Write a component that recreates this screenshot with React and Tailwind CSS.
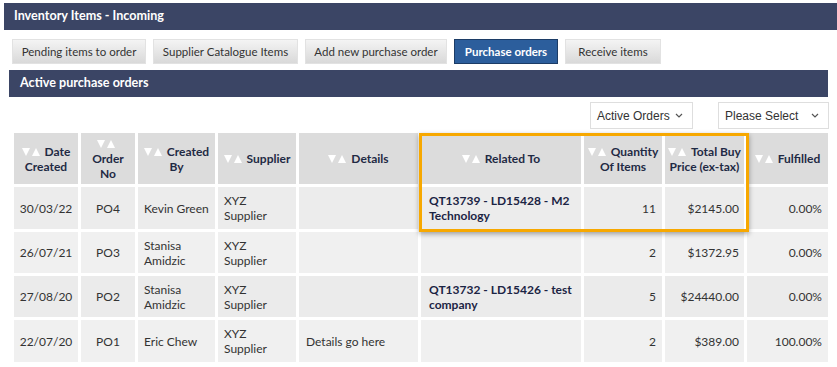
import React from 'react';

const BUTTONS = [
  { label: 'Pending items to order', w: 'w-[134px]' },
  { label: 'Supplier Catalogue Items', w: 'w-[145px]' },
  { label: 'Add new purchase order', w: 'w-[142px]' },
  { label: 'Purchase orders', w: 'w-[104px]', active: true },
  { label: 'Receive items', w: 'w-[96px]' },
];

const ORDERS = [
  { date: '30/03/22', no: 'PO4', by: 'Kevin Green', supplier: 'XYZ Supplier', details: '', related: 'QT13739 - LD15428 - M2 Technology', qty: 11, price: '$2145.00', fulfilled: '0.00%', bg: 'bg-[#ececec]', h: 'h-[42px]' },
  { date: '26/07/21', no: 'PO3', by: 'Stanisa Amidzic', supplier: 'XYZ Supplier', details: '', related: '', qty: 2, price: '$1372.95', fulfilled: '0.00%', bg: 'bg-[#f0f0f0]', h: 'h-[41px]' },
  { date: '27/08/20', no: 'PO2', by: 'Stanisa Amidzic', supplier: 'XYZ Supplier', details: '', related: 'QT13732 - LD15426 - test company', qty: 5, price: '$24440.00', fulfilled: '0.00%', bg: 'bg-[#ebebeb]', h: 'h-[41px]' },
  { date: '22/07/20', no: 'PO1', by: 'Eric Chew', supplier: 'XYZ Supplier', details: 'Details go here', related: '', qty: 2, price: '$389.00', fulfilled: '100.00%', bg: 'bg-[#f0f0f0]', h: 'h-[42px]' },
];

function SortArrows() {
  return (
    <svg width="18" height="8" viewBox="0 0 18 8" className="inline-block align-baseline mr-[5px]">
      <polygon points="0,0 8,0 4,8" fill="#ffffff" />
      <polygon points="10,8 18,8 14,0" fill="#ffffff" />
    </svg>
  );
}

function Th({ w, children }) {
  return (
    <th className={`${w} bg-[#dcdcdc] px-[2px] text-center align-middle whitespace-nowrap font-bold text-[12px] leading-[15px] text-[#1f2a44]`}>
      {children}
    </th>
  );
}

function FakeSelect({ label, w }) {
  return (
    <div className={`${w} h-[27px] flex items-center justify-between border border-[#dedede] bg-white pl-[6px] pr-[9px] whitespace-nowrap font-['Liberation_Sans',Arial,sans-serif] text-[12px] text-[#333]`}>
      <span>{label}</span>
      <svg width="8" height="5" viewBox="0 0 8 5">
        <polyline points="1,1 4,4 7,1" fill="none" stroke="#555" strokeWidth="1.2" />
      </svg>
    </div>
  );
}

export default function App() {
  return (
    <div className="w-[837px] h-[367px] overflow-hidden bg-white font-['Lato',sans-serif] pt-[3px]">
      <div className="ml-[4px] h-[27px] bg-[#3b4565] pl-[10px] flex items-center text-white font-bold text-[12.6px]">
        Inventory Items - Incoming
      </div>

      <div className="flex gap-[7px] ml-[12px] mt-[9px]">
        {BUTTONS.map((b) => (
          <div
            key={b.label}
            className={`${b.w} h-[25px] flex items-center justify-center whitespace-nowrap text-[11.5px] ${
              b.active
                ? 'bg-[#2c5e9c] border border-[#1c3c66] text-white font-bold'
                : 'bg-gradient-to-b from-[#f4f4f4] to-[#d9d9d9] border border-[#e2e2e2] text-[#333]'
            }`}
          >
            {b.label}
          </div>
        ))}
      </div>

      <div className="mx-[9px] mt-[6px] h-[27px] bg-[#3b4565] pl-[11px] flex items-center text-white font-bold text-[12.6px]">
        Active purchase orders
      </div>

      <div className="flex justify-end gap-[25px] mt-[5px] mr-[8px]">
        <FakeSelect label="Active Orders" w="w-[103px]" />
        <FakeSelect label="Please Select" w="w-[111px]" />
      </div>

      <div className="relative ml-[11px] mt-[1px] w-[820px]">
        <table className="table-fixed border-separate border-spacing-[3px] w-[820px]">
          <thead>
            <tr className="h-[51px]">
              <Th w="w-[64px]"><SortArrows />Date<br />Created</Th>
              <Th w="w-[54px]"><SortArrows /><br />Order<br />No</Th>
              <Th w="w-[77px]"><SortArrows />Created<br />By</Th>
              <Th w="w-[78px]"><SortArrows />Supplier</Th>
              <Th w="w-[119px]"><SortArrows />Details</Th>
              <Th w="w-[160px]"><SortArrows />Related To</Th>
              <Th w="w-[78px]"><SortArrows />Quantity<br />Of Items</Th>
              <Th w="w-[79px]"><SortArrows />Total Buy<br />Price (ex-tax)</Th>
              <Th w="w-[81px]"><SortArrows />Fulfilled</Th>
            </tr>
          </thead>
          <tbody className="text-[12px] leading-[15px] text-[#333]">
            {ORDERS.map((o) => (
              <tr key={o.no} className={o.h}>
                <td className={`${o.bg} text-center`}>{o.date}</td>
                <td className={`${o.bg} text-center`}>{o.no}</td>
                <td className={`${o.bg} px-[6px]`}>{o.by}</td>
                <td className={`${o.bg} px-[6px]`}>{o.supplier}</td>
                <td className={`${o.bg} px-[7px]`}>{o.details}</td>
                <td className={`${o.bg} px-[8px] font-bold text-[#1b2444]`}>{o.related}</td>
                <td className={`${o.bg} px-[6px] text-right`}>{o.qty}</td>
                <td className={`${o.bg} px-[5px] text-right`}>{o.price}</td>
                <td className={`${o.bg} px-[6px] text-right`}>{o.fulfilled}</td>
              </tr>
            ))}
          </tbody>
        </table>
        <div className="absolute left-[408px] top-[3px] w-[330px] h-[99px] border-[3px] border-[#f7a800] shadow-[0_2px_5px_rgba(0,0,0,0.35)] pointer-events-none" />
      </div>
    </div>
  );
}
